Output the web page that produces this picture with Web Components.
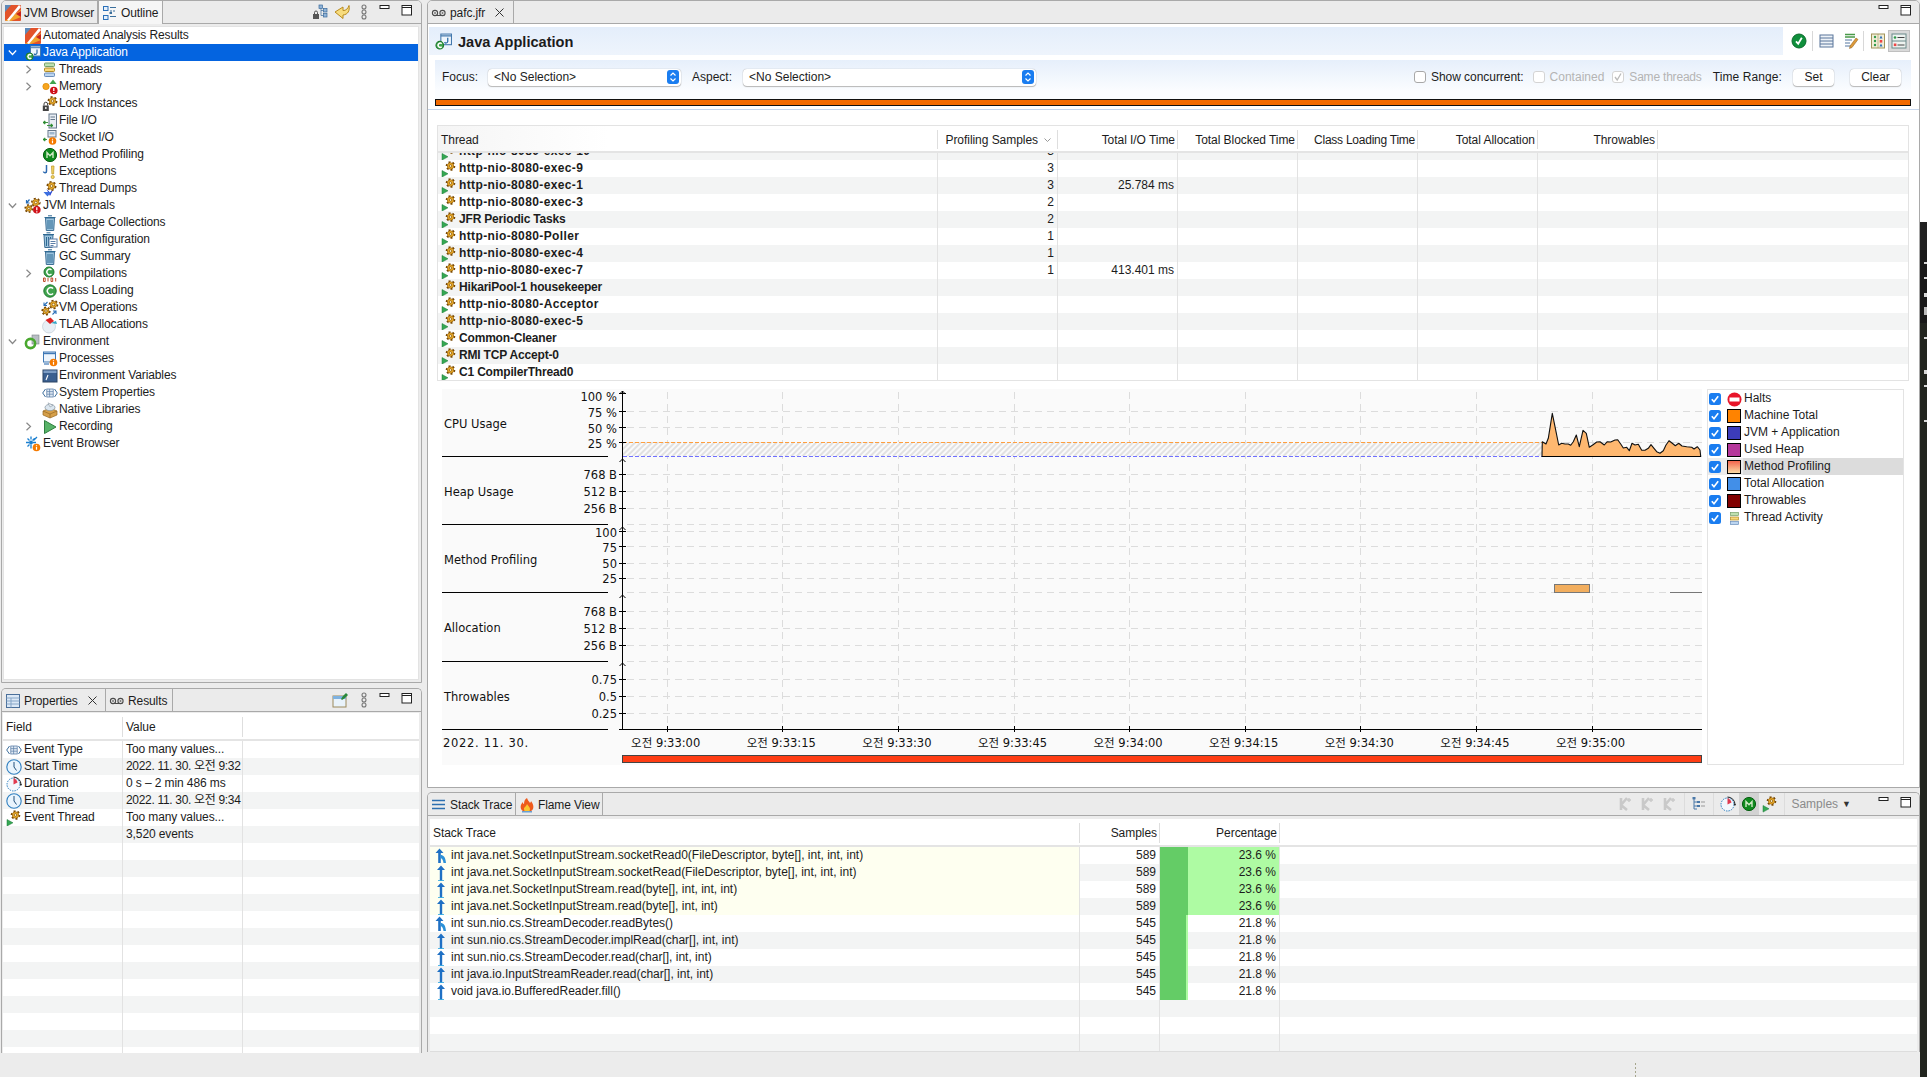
<!DOCTYPE html>
<html>
<head>
<meta charset="utf-8">
<style>
  html, body { margin: 0; padding: 0; background: #fff; }
  body { width: 1927px; height: 1077px; overflow: hidden; display: flex;
         font: 12px "Liberation Sans", "Noto Sans CJK KR", sans-serif; color: #1c1c1c; }
</style>
</head>
<body>
<app-window>
  <view-panel slot="left" style="height:683px" pad="2px 2px 2px 1px" closed>
    <view-tab slot="tabs" width="96"><app-icon name="flight" slot="icon"></app-icon>JVM Browser</view-tab>
    <view-tab slot="tabs" width="65" active><app-icon name="outline" slot="icon"></app-icon>Outline</view-tab>
    <app-icon slot="tools" name="locktree" style="margin-right:6px"></app-icon>
    <app-icon slot="tools" name="back" style="margin-right:6px"></app-icon>
    <app-icon slot="tools" name="dots" style="margin-right:5px"></app-icon>
    <app-icon slot="tools" name="min" style="margin-right:6px"></app-icon>
    <app-icon slot="tools" name="max" style="margin-right:6px"></app-icon>
    <tree-view id="tree"></tree-view>
  </view-panel>
  <view-panel slot="left" style="height:365px" pad="1px 2px 0 1px">
    <view-tab slot="tabs" width="104"><app-icon name="table" slot="icon"></app-icon>Properties<close-x slot="after"></close-x></view-tab>
    <view-tab slot="tabs" width="67"><app-icon name="tape" slot="icon"></app-icon>Results</view-tab>
    <app-icon slot="tools" name="pin" style="margin-right:8px"></app-icon>
    <app-icon slot="tools" name="dots" style="margin-right:5px"></app-icon>
    <app-icon slot="tools" name="min" style="margin-right:6px"></app-icon>
    <app-icon slot="tools" name="max" style="margin-right:6px"></app-icon>
    <data-table id="props" style="height:340px;letter-spacing:-.1px"></data-table>
  </view-panel>

  <view-panel slot="right" style="height:788px" closed white>
    <view-tab slot="tabs" width="86"><app-icon name="tape" slot="icon"></app-icon>pafc.jfr<close-x slot="after"></close-x></view-tab>
    <app-icon slot="tools" name="min" style="margin-right:6px"></app-icon>
    <app-icon slot="tools" name="max" style="margin-right:5px"></app-icon>
    <page-title>Java Application</page-title>
    <filter-bar></filter-bar>
    <data-table id="threads" bordered style="margin:15px 10px 0 9px;height:256px"></data-table>
    <flight-chart></flight-chart>
  </view-panel>
  <view-panel slot="right" style="height:260px" pad="3px 2px 0 2px">
    <view-tab slot="tabs" width="88"><app-icon name="list" slot="icon"></app-icon>Stack Trace</view-tab>
    <view-tab slot="tabs" width="87"><app-icon name="flame" slot="icon"></app-icon>Flame View</view-tab>
    <stack-tools slot="tools"></stack-tools>
    <data-table id="stack" style="height:233px;border-bottom:1px solid #ddd"></data-table>
  </view-panel>
  <status-dots slot="right"></status-dots>
</app-window>
<side-strip></side-strip>

<script>
// ---------- icon drawings ----------
const gear = (x, y, r) => `<circle cx="${x}" cy="${y}" r="${r + .8}" fill="none" stroke="#7a4800" stroke-width="1.6" pathLength="24" stroke-dasharray="2 2"/><circle cx="${x}" cy="${y}" r="${r}" fill="#f4b32a" stroke="#7a4800" stroke-width=".6"/><circle cx="${x}" cy="${y}" r="${r * .42}" fill="#fff3c8" stroke="#7a4800" stroke-width=".7"/>`;
const info = (x, y) => `<circle cx="${x}" cy="${y}" r="3.8" fill="#f57a00"/><path d="M${x} ${y - 2.2}v.9M${x} ${y - .6}v2.9" stroke="#fff" stroke-width="1.2"/>`;
const err = (x, y) => `<circle cx="${x}" cy="${y}" r="3.8" fill="#cf1018"/><path d="M${x} ${y - 2.5}v3M${x} ${y + 1.4}v1.2" stroke="#fff" stroke-width="1.3"/>`;
const trash = (x = 0) => `<path d="M${x + 3.5} 3h9l-.8 12.5h-7.4z" fill="#9cc4de" stroke="#3d6e94"/><path d="M${x + 2.5} 2.5h11M${x + 6} .8h4M${x + 6} 5v9M${x + 8} 5v9M${x + 10} 5v9" stroke="#2f6a93" fill="none"/>`;
const greenC = (x, y, r) => `<circle cx="${x}" cy="${y}" r="${r}" fill="#3fa34d" stroke="#1d7a2c"/><path d="M${x + r * .5} ${y - r * .4}A${r * .55} ${r * .55} 0 1 0 ${x + r * .5} ${y + r * .4}" fill="none" stroke="#fff" stroke-width="1.4"/>`;
const tri = (x, y, s = 6) => `<path d="M${x} ${y}l${s} ${s * .55}l-${s} ${s * .55}z" fill="#35a853" stroke="#1f7a3a" stroke-width=".5"/>`;
const clockFace = `<circle cx="8" cy="8" r="7.2" fill="#e9f4fd" stroke="#2f7fc0" stroke-width="1.1"/><path d="M8 3v5l2.5 3.5" fill="none" stroke="#214f7a"/>`;
const ICONS = {
  flight: `<rect width="16" height="16" rx="1" fill="#e2532b"/><path d="M0 0h6L0 7z" fill="#5d89b8"/><path d="M16 5v7L6 16H0z" fill="#f2a22c"/><path d="M14 0L2 15l2 1L16 2z" fill="#fff"/><path d="M11 9l5-3v6z" fill="#c8241c"/>`,
  outline: `<g fill="#e5effa" stroke="#2a6fb8"><rect x="1.5" y="1.5" width="4.5" height="4"/><rect x="1.5" y="10.5" width="4.5" height="4"/></g><path d="M8 2.5h6M8 6h2M11 6h2M8 11.5h6" stroke="#3b6f9c" stroke-width="1.2"/><rect x="7.5" y="7" width="2.5" height="2" fill="#3b6f9c"/>`,
  locktree: `<rect x="1" y="10" width="6" height="5" fill="#555"/><path d="M2.5 10V8.5a1.5 1.5 0 0 1 3 0V10" fill="none" stroke="#555"/><g fill="#8fb3d8" stroke="#3a6a9c" stroke-width=".7"><rect x="7" y="1" width="3.5" height="3.5"/><rect x="11.5" y="4.5" width="3.5" height="3.5"/><rect x="11.5" y="9.5" width="3.5" height="3.5"/></g><path d="M9 4.5v7h2.5M9 6.5h2.5" fill="none" stroke="#3a6a9c" stroke-width=".7"/>`,
  back: `<path d="M15 1.5c1 5-1 9-6 9.5v3.5L1 8l8-5v3.5c3 .3 5-2 6-5z" fill="#f7dc7e" stroke="#b88a1c"/>`,
  dots: `<g fill="none" stroke="#777" stroke-width="1.1"><circle cx="8" cy="3" r="2"/><circle cx="8" cy="8" r="2"/><circle cx="8" cy="13" r="2"/></g>`,
  min: `<rect x="3" y="1.5" width="9" height="3" fill="#fff" stroke="#222"/>`,
  max: `<rect x="3" y="1.5" width="9.5" height="9.5" fill="#fff" stroke="#222"/><path d="M3 3.5h9.5" stroke="#222"/>`,
  table: `<rect x="1.5" y="1.5" width="13" height="13" fill="#dbe8f6" stroke="#4a6f9a"/><path d="M1.5 5h13M1.5 8h13M1.5 11h13M6 5v9.5" stroke="#87a6c7" fill="none"/>`,
  tape: `<g fill="none" stroke="#4b4b4b" stroke-width="1.1"><circle cx="4" cy="8" r="2.6"/><circle cx="11.5" cy="8" r="2.6"/></g><path d="M2.5 10.5h11" stroke="#4b4b4b"/><circle cx="4" cy="8" r="1" fill="#777"/><circle cx="11.5" cy="8" r="1" fill="#777"/>`,
  pin: `<rect x="1" y="4" width="13" height="11" fill="#e9f3fb" stroke="#9c8a5c"/><rect x="1" y="4" width="13" height="3" fill="#7fb2e0"/><path d="M9 7l2-3 3-3 2 2-3 3-3 2z" fill="#2b8a3c"/>`,
  list: `<path d="M1 3.5h13M1 7.5h13M1 11.5h13" stroke="#2c6fb0" stroke-width="1.7"/>`,
  flame: `<path d="M8 1c1 3 2 3 3 5 1-1 1-2 1-2 2 3 3 5 2 8-1 2-3 3-6 3s-5-1-6-3c-1-3 0-5 2-7 0 1 0 2 1 2 0-3 1-5 3-6z" fill="#ee5a1c"/><path d="M8 7c1 2 3 3 3 5s-1 3-3 3-3-1-3-3 2-2 3-5z" fill="#fbc531"/><path d="M3 14h10v1.5H3z" fill="#6a9ed0"/>`,
  java: `<rect x="5.5" y="1" width="10" height="10" fill="#eef5fc" stroke="#4378ad"/><path d="M5.5 2.7h10" stroke="#4378ad"/><path d="M12 4.5v3.5a1.6 1.6 0 0 1-3 .6" fill="none" stroke="#2b6ba8" stroke-width="1.2"/>${greenC(4.5, 11.5, 3.6)}`,
  threads: `<rect x="2.5" y="1" width="10" height="3.5" rx=".8" fill="#bfe0b0" stroke="#76a069"/><rect x="2.5" y="6" width="10" height="3.5" rx=".8" fill="#f7d87a" stroke="#b08a24"/><rect x="2.5" y="11" width="10" height="3.5" rx=".8" fill="#bcd5f0" stroke="#6a8dba"/>`,
  memory: `<circle cx="4" cy="7.5" r="3.2" fill="#f7a51e" stroke="#d98400" stroke-width=".6"/><path d="M7.5 5l3.5-4.5L14.5 5z" fill="#3fa34d"/>${err(11.8, 11.5)}`,
  lock: `<rect x=".8" y="9.5" width="6" height="5.5" fill="#444"/><path d="M2 9.5V8a1.8 1.8 0 0 1 3.6 0v1.5" fill="none" stroke="#444"/><rect x="3" y="11" width="1.6" height="2" fill="#ddd"/>${gear(10.5, 5, 3.3)}`,
  file: `<rect x="7" y="1" width="7.5" height="14" fill="#e9eef4" stroke="#66788c"/><path d="M8.5 4h4.5M8.5 6.5h4.5" stroke="#66788c"/><path d="M1 9.5h5M1 9.5l2-1.6v3.2zM5 12.5h6M11 12.5l-2-1.6v3.2z" stroke="#2b8a2f" fill="#2b8a2f" stroke-width=".9"/>`,
  socket: `<rect x="6" y=".5" width="8" height="6.5" fill="#e9eef4" stroke="#66788c"/><rect x="7.5" y="2" width="5" height="2.5" fill="#9eb7cf"/><path d="M1 9.5h4M1 9.5l2-1.6v3.2z" stroke="#2b8a2f" fill="#2b8a2f" stroke-width=".9"/>${info(10.5, 11)}`,
  method: `<circle cx="8" cy="8" r="6.6" fill="#0f8a1e" stroke="#0a5f14"/><path d="M5 11V5.5l3 3.2 3-3.2V11" fill="none" stroke="#cfe9c4" stroke-width="1.4"/>`,
  exceptions: `<path d="M4.5 1v6a1.5 1.5 0 0 1-3 .5" fill="none" stroke="#2d6ab1" stroke-width="1.5"/><path d="M9.5 2h2.5l-.4 8h-1.7z" fill="#f3d566" stroke="#b99420" stroke-width=".7"/><circle cx="10.7" cy="13" r="1.6" fill="#f3d566" stroke="#b99420" stroke-width=".7"/>`,
  dumps: `<path d="M4.5 8l3.5 3.5L11.5 8 8 15z" fill="#2a3fd0"/><path d="M1.5 11h8l-4 4.5z" fill="#3b6fe0"/>${gear(9.5, 5, 3.4)}`,
  internals: `<path d="M1.5 5l3-3.5M1.5 2v3h3" fill="none" stroke="#2a6fb8" stroke-width="1.2"/>${gear(3.8, 10.5, 2.8)}${gear(10.8, 4.5, 3.2)}${err(11.8, 11.8)}`,
  trash: trash(),
  gcconfig: `${trash(-1.5)}<rect x="7" y="7" width="8" height="8" fill="#fff" stroke="#5c7fa8"/><path d="M8.5 9.5h5M8.5 11.5h5M8.5 13.5h3" stroke="#5c7fa8"/>`,
  compilations: `${greenC(7, 6, 5)}<path d="M1.5 12h1.7v3.5H1.5zM6 12v3.5M9 12h1.7v3.5H9zM13.7 12v3.5" fill="none" stroke="#b83a14" stroke-width=".9"/>`,
  classload: greenC(8, 8, 6.2),
  vmops: `${gear(4, 11, 3)}${gear(11.5, 4.5, 3.2)}<path d="M2 5.5l3.5-3.5M2 2.5v3h3M14 11l-3.5 3.5M14 14v-3h-3" fill="none" stroke="#2a6fb8" stroke-width="1.1"/>`,
  tlab: `<circle cx="7" cy="9.5" r="6.5" fill="#e8eff5" stroke="#b8c4cc" stroke-width=".6"/><path d="M3.5 3l5-2.5L12 4l-4 3z" fill="#dd2222"/><path d="M9 6l5-2 1 3z" fill="#31a6c8"/>`,
  env: `<rect x="7" y="1" width="7" height="9" fill="#b8bec4" stroke="#7c8388" stroke-width=".6"/><circle cx="5.5" cy="9.5" r="4.6" fill="none" stroke="#49a82f" stroke-width="2.6"/>`,
  processes: `<rect x="1.5" y="1" width="12" height="10" fill="#eef5fc" stroke="#3f78b5"/><path d="M1.5 2.5h12" stroke="#3f78b5" stroke-width="1.4"/><path d="M2 13h5" stroke="#3f78b5" stroke-width="1.2"/>${info(11.5, 11.5)}`,
  envvars: `<rect x="1" y="2" width="14" height="12" fill="#3a5f90" stroke="#2a4465"/><rect x="1.5" y="2.5" width="13" height="2.5" fill="#7c9cc4"/><path d="M4 12l2-5" stroke="#fff" stroke-width="1.1"/>`,
  sysprops: `<path d="M3.5 4L.7 8l2.8 4M12.5 4l2.8 4-2.8 4" fill="none" stroke="#3c6e9c"/><rect x="4.8" y="4" width="6.4" height="8" fill="#dfe9f3" stroke="#5c7fa8" stroke-width=".8"/><path d="M5 6.6h6M5 9.2h6M7.6 4v8" stroke="#5c7fa8" stroke-width=".7"/>`,
  native: `<path d="M1 9l7-3 7 3v4l-7 3-7-3z" fill="#d6a04a" stroke="#966824" stroke-width=".7"/><path d="M1 9l7 3 7-3M8 12v4" fill="none" stroke="#966824" stroke-width=".7"/><ellipse cx="8" cy="5.5" rx="5" ry="3.2" fill="#dbe6ef" stroke="#7e8c99" stroke-width=".7"/><path d="M6 .8l5 2.6-3 1.6z" fill="#e8eef3" stroke="#7e8c99" stroke-width=".5"/>`,
  recording: `<path d="M2.5 1.5L14 8 2.5 14.5z" fill="#58b368" stroke="#2f7f3f"/>`,
  events: `<path d="M6 .5v3M6 8.5v4M1 6.5h3M8 6.5h3M2.5 2.5l2 2M9.5 2.5l-2 2M2.5 10.5l2-2M12 1l-3.5 3.5" stroke="#1a7fd0" stroke-width="1.3"/><circle cx="6" cy="6.5" r="2" fill="#1a7fd0"/>${info(11.5, 11.5)}`,
  thread: `${tri(1, 9.5, 6)}${gear(9.5, 5, 3.2)}`,
  clock: clockFace,
  duration: `<circle cx="7.5" cy="8.5" r="6.5" fill="#f3f8fd" stroke="#2f7fc0" stroke-dasharray="1.5 1"/><path d="M7.5 2v6.5l4-2A6 6 0 0 0 7.5 2z" fill="#e03a50"/><path d="M7.5 1A7.5 7.5 0 0 1 15 8.5" fill="none" stroke="#222"/><path d="M13.5 8l1.5 2 1-2z" fill="#222"/>`,
  up: `<path d="M8 .5l4 4.5H9.2v10.5H6.8V5H4z" fill="#1f70c4"/><path d="M5 15h6v.8H5z" fill="#19a0df"/>`,
  upbranch: `<path d="M6.5 .5l4 4.5H7.8V15H5.2V5H2.5z" fill="#1f70c4"/><path d="M7.5 7c3 0 5 2 5.5 8h-2.5c-.3-3-1.5-4.5-3-5z" fill="#2a90d8"/>`,
  check: `<circle cx="8" cy="8" r="7" fill="#0f8f3c" stroke="#0a6a2b"/><path d="M5 8.3l2.2 2.5 3.6-6" fill="none" stroke="#fff" stroke-width="1.8"/>`,
  tbl2: `<rect x="1" y="2" width="13" height="12" fill="#eef3f8" stroke="#58749a"/><path d="M1 5h13M1 8h13M1 11h13" stroke="#58749a"/>`,
  edit: `<path d="M2 1.5h10M2 4h10" stroke="#4a9a4a" stroke-width="1.5"/><path d="M2 7h7M2 10h5M2 13h7" stroke="#5577a0"/><path d="M7 13l6-8 2 1.5-6 8-2.5 1z" fill="#dd9a3a" stroke="#8a5a18" stroke-width=".5"/>`,
  compact: `<rect x="1.5" y="1" width="13" height="14" fill="#f2eed8" stroke="#a0945a"/><path d="M8 1v14" stroke="#a0945a" stroke-width=".6"/><g fill="#2f9a4a"><circle cx="5" cy="4" r="1.2"/><circle cx="5" cy="8" r="1.2"/><circle cx="5" cy="12" r="1.2"/></g><path d="M11 2.5l1.5 3h-3z" fill="#2a6fb8"/><rect x="9.7" y="7" width="2.6" height="2.6" fill="#e44"/><path d="M11 10.5l1.5 3h-3z" fill="#2a6fb8"/>`,
  wide: `<rect x="1" y="1" width="14" height="14" fill="#eef3f0" stroke="#6a8a8a"/><path d="M1 8h14" stroke="#6a8a8a"/><circle cx="4" cy="4.5" r="1.3" fill="#2f9a4a"/><path d="M6.5 4.5h7" stroke="#444"/><rect x="2.8" y="10.5" width="2.6" height="2.6" fill="#e44"/><path d="M6.5 12h7" stroke="#444"/>`,
  kup: `<path d="M3 2v12M3 9l6-7M3 9l6 5" fill="none" stroke="#c9c9c9" stroke-width="2.6"/><path d="M11 2v4M9 4h4" stroke="#c9c9c9" stroke-width="1.4"/>`,
  tree2: `<path d="M3 2v11M3 6h3M3 10h3M3 13h3" fill="none" stroke="#4a78a8"/><g fill="#4a78a8"><rect x="1.5" y="1" width="3" height="2.4"/><rect x="6" y="5" width="3" height="2"/><rect x="6" y="9" width="3" height="2"/></g><path d="M10 6h4M10 10h4" stroke="#999"/>`
};

class AppIcon extends HTMLElement {
  constructor() {
    super();
    this.attachShadow({ mode: 'open' });
  }
  connectedCallback() {
    const size = this.getAttribute('size') || 16;
    this.shadowRoot.innerHTML = `
      <style>:host { display: inline-flex; flex: none; width: ${size}px; height: ${size}px; } svg { display: block; overflow: visible; }</style>
      <svg width="${size}" height="${size}" viewBox="0 0 16 16">${ICONS[this.getAttribute('name')] || ''}</svg>`;
  }
}
customElements.define('app-icon', AppIcon);

class CloseX extends HTMLElement {
  constructor() {
    super();
    this.attachShadow({ mode: 'open' }).innerHTML = `
      <style>:host { display: inline-flex; margin-left: 7px; }</style>
      <svg width="9" height="9"><path d="M.5 .5l8 8M8.5 .5l-8 8" stroke="#333" fill="none"/></svg>`;
  }
}
customElements.define('close-x', CloseX);

// ---------- window and panels ----------
class AppWindow extends HTMLElement {
  constructor() {
    super();
    this.attachShadow({ mode: 'open' }).innerHTML = `
      <style>
        :host { display: grid; grid-template-columns: 421px 1fr; column-gap: 5px; flex: none;
                width: 1919px; height: 1077px; padding-left: 1px; background: #ececec; }
        .col { display: flex; flex-direction: column; min-width: 0; }
        .left { gap: 5px; }
        .right { gap: 4px; }
      </style>
      <div class="col left"><slot name="left"></slot></div>
      <div class="col right"><slot name="right"></slot></div>`;
  }
}
customElements.define('app-window', AppWindow);

class ViewPanel extends HTMLElement {
  constructor() {
    super();
    this.attachShadow({ mode: 'open' });
  }
  connectedCallback() {
    const pad = this.getAttribute('pad') || '0';
    this.shadowRoot.innerHTML = `
      <style>
        :host { display: flex; flex-direction: column; flex: none; box-sizing: border-box;
                border: 1px solid #a9a9a9; border-bottom: none; border-radius: 5px 5px 0 0; overflow: hidden; }
        :host([closed]) { border-bottom: 1px solid #a9a9a9; }
        .head { display: flex; align-items: stretch; height: 23px; box-sizing: border-box; flex: none;
                border-bottom: 1px solid #a9a9a9; background: #ebebeb; }
        .tools { margin-left: auto; display: flex; align-items: center; }
        .body { flex: 1; min-height: 0; padding: ${pad}; display: flex; flex-direction: column; }
        :host([white]) .body { background: #fff; }
      </style>
      <div class="head"><slot name="tabs"></slot><div class="tools"><slot name="tools"></slot></div></div>
      <div class="body"><slot></slot></div>`;
  }
}
customElements.define('view-panel', ViewPanel);

class ViewTab extends HTMLElement {
  constructor() {
    super();
    this.attachShadow({ mode: 'open' });
  }
  connectedCallback() {
    this.shadowRoot.innerHTML = `
      <style>
        :host { display: flex; align-items: center; gap: 3px; box-sizing: border-box; flex: none;
                width: ${this.getAttribute('width')}px; padding: 0 0 0 3px; border-right: 1px solid #a9a9a9;
                white-space: nowrap; font-size: 12px; letter-spacing: -.1px; height: 23px; margin-bottom: -1px; }
        :host([active]) { background: #f6f6f6; border-left: 1px solid #a9a9a9; }
      </style>
      <slot name="icon"></slot><span><slot></slot></span><slot name="after"></slot>`;
  }
}
customElements.define('view-tab', ViewTab);

// ---------- outline tree ----------
const TREE = [
  [1, 'flight', 'Automated Analysis Results', ''],
  [1, 'java', 'Java Application', 'v', true],
  [2, 'threads', 'Threads', '>'],
  [2, 'memory', 'Memory', '>'],
  [2, 'lock', 'Lock Instances', ''],
  [2, 'file', 'File I/O', ''],
  [2, 'socket', 'Socket I/O', ''],
  [2, 'method', 'Method Profiling', ''],
  [2, 'exceptions', 'Exceptions', ''],
  [2, 'dumps', 'Thread Dumps', ''],
  [1, 'internals', 'JVM Internals', 'v'],
  [2, 'trash', 'Garbage Collections', ''],
  [2, 'gcconfig', 'GC Configuration', ''],
  [2, 'trash', 'GC Summary', ''],
  [2, 'compilations', 'Compilations', '>'],
  [2, 'classload', 'Class Loading', ''],
  [2, 'vmops', 'VM Operations', ''],
  [2, 'tlab', 'TLAB Allocations', ''],
  [1, 'env', 'Environment', 'v'],
  [2, 'processes', 'Processes', ''],
  [2, 'envvars', 'Environment Variables', ''],
  [2, 'sysprops', 'System Properties', ''],
  [2, 'native', 'Native Libraries', ''],
  [2, 'recording', 'Recording', '>'],
  [1, 'events', 'Event Browser', '']
];
const chevron = (dir, color) => dir === 'v'
  ? `<svg width="9" height="9"><path d="M.8 2.5l3.7 4 3.7-4" fill="none" stroke="${color}" stroke-width="1.2"/></svg>`
  : dir === '>' ? `<svg width="9" height="9"><path d="M2.5 .8l4 3.7-4 3.7" fill="none" stroke="${color}" stroke-width="1.2"/></svg>` : '';

class TreeView extends HTMLElement {
  constructor() {
    super();
    this.attachShadow({ mode: 'open' }).innerHTML = `
      <style>
        :host { display: block; flex: 1; background: #fff; border: 1px solid #e3e3e3; overflow: hidden; letter-spacing: -.12px; }
        .row { display: flex; align-items: center; height: 17px; white-space: nowrap; }
        .sel { background: #0464e0; color: #fff; }
        .arrow { width: 9px; height: 9px; flex: none; display: flex; }
        .lv1 { padding-left: 4px; }
        .lv2 { padding-left: 20px; }
        .lv1 app-icon { margin-left: 8px; }
        .lv2 app-icon { margin-left: 9px; }
        .lv1 span { margin-left: 2px; }
        .lv2 span { margin-left: 1px; }
        span { margin-bottom: 1px; }
      </style>
      ${TREE.map(r => `<div class="row lv${r[0]} ${r[4] ? 'sel' : ''}"><div class="arrow">${chevron(r[3], r[4] ? '#fff' : '#888')}</div><app-icon name="${r[1]}"></app-icon><span>${r[2]}</span></div>`).join('')}`;
  }
}
customElements.define('tree-view', TreeView);

// ---------- tables ----------
class DataTable extends HTMLElement {
  constructor() {
    super();
    this.attachShadow({ mode: 'open' });
  }
  configure({ cols, head, rows, offset = 0, stripe = 1, headHeight = 28, headFade = false }) {
    const grid = cols.join(' ');
    const headCells = head.map(h => `<div class="th ${h.r ? 'r' : ''}" style="${h.ls ? `letter-spacing:${h.ls}px` : ''}">${h.t}${h.sort ? '<svg class="sort" width="7" height="5"><path d="M.5 .5l3 3 3-3" fill="none" stroke="#999"/></svg>' : ''}</div>`).join('');
    const body = rows.map((row, i) => `<div class="tr ${i % 2 === stripe ? 'alt' : ''}">` + row.map(c => {
      const st = [c.bg ? `background:${c.bg}` : '', c.ls ? `letter-spacing:${c.ls}px` : '', c.tight ? 'padding-right:0' : ''].join(';');
      return `<div class="td ${c.r ? 'r' : ''} ${c.b ? 'b' : ''}" style="${st}">${c.i ? `<app-icon name="${c.i}"></app-icon>` : ''}<span>${c.t || ''}</span></div>`;
    }).join('') + '</div>').join('');
    this.shadowRoot.innerHTML = `
      <style>
        :host { display: flex; flex-direction: column; flex: none; overflow: hidden; background: #fff; box-sizing: border-box; }
        :host([bordered]) { border: 1px solid #e3e3e3; }
        .thead, .tr { display: grid; grid-template-columns: ${grid}; }
        .thead { height: ${headHeight}px; flex: none; box-sizing: border-box; border-bottom: 2px solid #e4e4e4; padding: 4px 0 2px;
                 ${headFade ? 'background: linear-gradient(90deg, #f5f5f5, #fff 170px);' : ''} }
        .th { border-right: 1px solid #dedede; padding: 1px 2px 0 3px; line-height: 18px; white-space: nowrap; overflow: hidden; letter-spacing: -.05px; }
        .th:last-child { border-right: none; }
        .th.r { text-align: right; }
        .sort { margin: 0 4px 0 6px; vertical-align: 1px; }
        .rows { flex: 1; overflow: hidden; }
        .inner { margin-top: ${offset}px; }
        .tr { height: 17px; }
        .alt { background: #f3f4f4; }
        .td { display: flex; align-items: center; gap: 2px; border-right: 1px solid #e2e2e2; padding: 0 3px; white-space: nowrap; overflow: hidden; line-height: 17px; }
        .td:last-child { border-right: none; }
        .td.r { justify-content: flex-end; }
        .td.b { font-weight: bold; }
      </style>
      <div class="thead">${headCells}</div>
      <div class="rows"><div class="inner">${body}</div></div>`;
  }
}
customElements.define('data-table', DataTable);

// ---------- editor page parts ----------
class PageTitle extends HTMLElement {
  constructor() {
    super();
    this.attachShadow({ mode: 'open' }).innerHTML = `
      <style>
        :host { display: flex; flex: none; height: 28px; margin: 3px 0 0 1px; }
        .band { width: 1354px; flex: none; display: flex; align-items: center; gap: 6px; padding: 1px 0 0 6px; box-sizing: border-box;
                background: linear-gradient(#e4eefb, #eef4fc); font: bold 14.6px "Liberation Sans", sans-serif; }
        .tools { display: flex; align-items: center; padding-left: 8px; }
        .sep { width: 1px; height: 20px; background: #d8d8d8; }
        .on { background: #d9d9d9; border: 1px solid #c0c0c0; padding: 2px; display: flex; }
      </style>
      <div class="band"><app-icon name="java" size="17"></app-icon><span><slot></slot></span></div>
      <div class="tools">
        <app-icon name="check"></app-icon><div class="sep" style="margin:0 6px 0 5px"></div>
        <app-icon name="tbl2" style="margin-right:8px"></app-icon><app-icon name="edit"></app-icon><div class="sep" style="margin:0 6px 0 4px"></div>
        <app-icon name="compact" style="margin-right:2px"></app-icon><div class="on"><app-icon name="wide"></app-icon></div>
      </div>`;
  }
}
customElements.define('page-title', PageTitle);

const stepper = `<svg width="12" height="14"><rect width="12" height="14" rx="3" fill="#1a7df0"/><path d="M3.5 5.5L6 3l2.5 2.5M3.5 8.5L6 11l2.5-2.5" fill="none" stroke="#fff" stroke-width="1.2"/></svg>`;
class ComboBox extends HTMLElement {
  constructor() {
    super();
    this.attachShadow({ mode: 'open' }).innerHTML = `
      <style>
        :host { display: flex; align-items: center; justify-content: space-between; height: 17px; box-sizing: border-box; flex: none;
                background: #fff; border-radius: 4px; box-shadow: 0 0 1px #999, 0 1px 1px #bbb; padding: 0 2px 0 6px; }
        svg { display: block; }
      </style>
      <span><slot></slot></span>${stepper}`;
  }
}
customElements.define('combo-box', ComboBox);

class CheckMark extends HTMLElement {
  constructor() {
    super();
    this.attachShadow({ mode: 'open' });
  }
  connectedCallback() {
    const off = this.hasAttribute('disabled');
    const tick = this.hasAttribute('checked') ? `<path d="M3 6l2.2 3L9 2.5" fill="none" stroke="${off ? '#bbb' : '#555'}" stroke-width="1.3"/>` : '';
    this.shadowRoot.innerHTML = `
      <style>:host { display: flex; align-items: center; gap: 5px; color: ${off ? '#b4b4b4' : 'inherit'}; white-space: nowrap; flex: none; } svg { display: block; }</style>
      <svg width="12" height="12"><rect x=".5" y=".5" width="11" height="11" rx="2.5" fill="#fff" stroke="${off ? '#d4d4d4' : '#a8a8a8'}"/>${tick}</svg><span><slot></slot></span>`;
  }
}
customElements.define('check-mark', CheckMark);

class PushButton extends HTMLElement {
  constructor() {
    super();
    this.attachShadow({ mode: 'open' }).innerHTML = `
      <style>
        :host { display: flex; align-items: center; justify-content: center; height: 17px; flex: none;
                background: #fff; border-radius: 4px; box-shadow: 0 0 1px #999, 0 1px 1px #bbb; }
      </style><slot></slot>`;
  }
}
customElements.define('push-button', PushButton);

class FilterBar extends HTMLElement {
  constructor() {
    super();
    this.attachShadow({ mode: 'open' }).innerHTML = `
      <style>
        :host { display: block; flex: none; margin-top: 5px; }
        .band { display: flex; align-items: center; height: 39px; margin: 0 8px 0 7px; padding: 0 10px 5px 7px; box-sizing: border-box;
                background: linear-gradient(#e6effb, #fbfdff 80%); }
        .grow { margin-left: auto; }
        .bar { margin: 0 8px 0 7px; background: #f26a00; border: 1px solid #111; height: 5px; }
        .line { height: 1px; background: #c6d6ec; margin-top: 3px; }
      </style>
      <div class="band">
        <span>Focus:</span>
        <combo-box style="width:193px;margin-left:10px">&lt;No Selection&gt;</combo-box>
        <span style="margin-left:11px">Aspect:</span>
        <combo-box style="width:293px;margin-left:11px">&lt;No Selection&gt;</combo-box>
        <check-mark class="grow" style="letter-spacing:-.05px">Show concurrent:</check-mark>
        <check-mark disabled style="margin-left:9px">Contained</check-mark>
        <check-mark disabled checked style="margin-left:8px;letter-spacing:-.2px">Same threads</check-mark>
        <span style="margin-left:11px;letter-spacing:.1px">Time Range:</span>
        <push-button style="width:41px;margin-left:11px">Set</push-button>
        <push-button style="width:51px;margin-left:16px">Clear</push-button>
      </div>
      <div class="bar"></div>
      <div class="line"></div>`;
  }
}
customElements.define('filter-bar', FilterBar);

// ---------- chart ----------
const AREA = [[127,155],[138,162],[145,145],[157,70],[165,110],[176,165],[185,160],[195,162],[205,162],[212,166],[220,155],[229,135],[238,170],[249,121],[259,130],[268,172],[278,165],[290,156],[300,155],[313,165],[322,155],[332,156],[345,150],[353,149],[362,162],[370,174],[380,172],[388,182],[396,160],[405,165],[415,163],[425,181],[435,181],[445,175],[453,164],[462,175],[470,185],[480,190],[490,182],[498,165],[507,152],[517,160],[526,167],[536,160],[546,168],[560,170],[575,172],[582,177],[592,170],[600,180],[602,199]]
  .map(p => [(1500 + p[0] / 3).toFixed(1), (390 + p[1] / 3).toFixed(1)]);
const LANES = [['CPU Usage', 68], ['Heap Usage', 68], ['Method Profiling', 68], ['Allocation', 69], ['Throwables', 68]];
const TICKS = [
  [397, 393, '100 %'], [412.5, 411, '75 %'], [428.5, 427, '50 %'], [443.5, 442, '25 %'],
  [475, 474, '768 B'], [492, 491, '512 B'], [509, 508, '256 B'],
  [533, 531, '100'], [548, 546, '75'], [564, 563, '50'], [579, 578, '25'],
  [612, 611, '768 B'], [629, 628, '512 B'], [646, 645, '256 B'],
  [680, 679, '0.75'], [697, 696, '0.5'], [714, 713, '0.25']
];
const TIMES = ['9:33:00', '9:33:15', '9:33:30', '9:33:45', '9:34:00', '9:34:15', '9:34:30', '9:34:45', '9:35:00'];
const LEGEND = [
  ['Halts', `<circle cx="7.5" cy="7.5" r="7" fill="#e8152a"/><rect x="2.5" y="5.5" width="10" height="4" fill="#fff"/>`],
  ['Machine Total', `<rect x=".5" y=".5" width="13" height="13" fill="#ff8300" stroke="#000"/>`],
  ['JVM + Application', `<rect x=".5" y=".5" width="13" height="13" fill="#3c3cba" stroke="#000"/>`],
  ['Used Heap', `<rect x=".5" y=".5" width="13" height="13" fill="#b5379b" stroke="#000"/>`],
  ['Method Profiling', `<defs><linearGradient id="mp" x1="0" y1="0" x2="0" y2="1"><stop offset="0" stop-color="#f2604a"/><stop offset="1" stop-color="#fbe0a8"/></linearGradient></defs><rect x=".5" y=".5" width="13" height="13" fill="url(#mp)" stroke="#000"/>`, true],
  ['Total Allocation', `<rect x=".5" y=".5" width="13" height="13" fill="#428fe8" stroke="#000"/>`],
  ['Throwables', `<rect x=".5" y=".5" width="13" height="13" fill="#800000" stroke="#000"/>`],
  ['Thread Activity', `<g transform="translate(3 1)"><rect x=".5" y=".5" width="8" height="3" fill="#bfe0b0" stroke="#76a069" stroke-width=".7"/><rect x=".5" y="5" width="8" height="3" fill="#f7d87a" stroke="#b08a24" stroke-width=".7"/><rect x=".5" y="9.5" width="8" height="3" fill="#bcd5f0" stroke="#6a8dba" stroke-width=".7"/></g>`]
];

class FlightChart extends HTMLElement {
  constructor() {
    super();
    const gridY = [411, 427, 442, 474, 491, 508, 524.5, 531, 546, 563, 578, 592.5, 611, 628, 645, 661, 679, 696, 713];
    const gridX = TIMES.map((t, i) => 666.7 + 115.6 * i);
    const axisTops = [391, 459, 527, 595, 663];
    const area = `M1542 456.5 ${AREA.map(p => 'L' + p.join(' ')).join(' ')} L1700.7 456.5 Z`;
    const svg = `
      <svg width="1094" height="376" viewBox="608 389 1094 376">
        <defs><pattern id="hatch" width="4" height="4" patternUnits="userSpaceOnUse" patternTransform="rotate(-45)"><rect width="4" height="4" fill="#fafafa"/><path d="M0 2h4" stroke="#c8c8c8"/></pattern></defs>
        ${gridY.map(y => `<path d="M627 ${Math.floor(y) + .5}H1702" stroke="#dcdcdc" stroke-dasharray="7 5"/>`).join('')}
        ${gridX.map(x => `<path d="M${Math.round(x) + .5} 392V729" stroke="#dcdcdc" stroke-dasharray="7 5"/>`).join('')}
        <rect x="623" y="442" width="919" height="14" fill="url(#hatch)"/>
        <path d="M623 442.5H1542" stroke="#ff9e3d" stroke-dasharray="4 2"/>
        <path d="M623 456.5H1542" stroke="#7070ff" stroke-dasharray="4 2"/>
        <path d="${area}" fill="#ffb870" stroke="#111" stroke-width="1.1" stroke-linejoin="round"/>
        <path d="M1542 456.5H1701" stroke="#000" stroke-width="1.2"/>
        <rect x="1554.5" y="584.5" width="35" height="8" fill="#f2ae5e" stroke="#777"/>
        <path d="M1670 592.5H1702" stroke="#777"/>
        <path d="M622.5 391V729.5M619 729.5H1702" stroke="#000"/>
        ${axisTops.map(y => `<path d="M619.5 ${y + 3}l3-3 3 3" fill="none" stroke="#000"/>`).join('')}
        ${TICKS.map(t => `<path d="M619 ${t[1] + .5}h7" stroke="#000"/><text x="617" y="${t[0] + 4}" text-anchor="end">${t[2]}</text>`).join('')}
        ${gridX.map((x, i) => `<path d="M${Math.round(x) + .5} 726v6" stroke="#000"/><text x="${x - 1}" y="747" text-anchor="middle">오전 ${TIMES[i]}</text>`).join('')}
        <rect x="622.5" y="755.5" width="1079" height="7" fill="#ff3d14" stroke="#444"/>
      </svg>`;
    this.attachShadow({ mode: 'open' }).innerHTML = `
      <style>
        :host { display: flex; flex: none; height: 376px; margin: 8px 0 0 14px; font: 11.5px "DejaVu Sans", "Noto Sans CJK KR", sans-serif; color: #111; }
        .plot { display: flex; background: #fafafa; flex: none; width: 1260px; }
        .labels { width: 166px; flex: none; display: flex; flex-direction: column; }
        .lane { display: flex; align-items: center; box-sizing: border-box; border-bottom: 1px solid #000; padding: 2px 0 0 2px; }
        .date { padding: 5px 0 0 1px; letter-spacing: .7px; line-height: 16px; }
        svg { display: block; flex: none; overflow: visible; }
        svg text { font: 11.5px "DejaVu Sans", "Noto Sans CJK KR", sans-serif; fill: #111; }
        .legend { width: 197px; margin-left: 5px; flex: none; box-sizing: border-box; border: 1px solid #e3e3e3; background: #fff; font: 12px "Liberation Sans", sans-serif; }
        .item { display: flex; align-items: center; height: 17px; color: #1c1c1c; }
        .box { width: 12px; height: 12px; margin: 0 5px 0 1px; flex: none; overflow: hidden; }
        .swatch { width: 14px; height: 14px; margin-right: 3px; flex: none; display: block; }
        .item span { flex: 1; line-height: 17px; }
        .sel { background: linear-gradient(90deg, #ececec 35px, #dcdcdc 35px); }
      </style>
      <div class="plot">
        <div class="labels">
          ${LANES.map(l => `<div class="lane" style="height:${l[1]}px">${l[0]}</div>`).join('')}
          <div class="date">2022. 11. 30.</div>
        </div>
        ${svg}
      </div>
      <div class="legend">
        ${LEGEND.map(l => `<div class="item ${l[2] ? 'sel' : ''}">
          <svg class="box" viewBox="0 0 12 12"><rect width="12" height="12" rx="2.5" fill="#1a7df0"/><path d="M2.8 6.2l2.2 2.6 4.2-5.6" fill="none" stroke="#fff" stroke-width="1.6"/></svg>
          <svg class="swatch" viewBox="0 0 14 14" style="margin-left:1px">${l[1]}</svg>
          <span>${l[0]}</span></div>`).join('')}
      </div>`;
  }
}
customElements.define('flight-chart', FlightChart);

// ---------- little bits ----------
class StackTools extends HTMLElement {
  constructor() {
    super();
    this.attachShadow({ mode: 'open' }).innerHTML = `
      <style>
        :host { display: flex; align-items: center; color: #8a8a8a; }
        .sep { width: 1px; height: 22px; background: #dcdcdc; margin: 0 6px; }
        .on { background: #d2d2d2; display: flex; padding: 3px 2px; margin: 0 3px; }
        .gap { margin-right: 6px; }
      </style>
      <app-icon name="kup" class="gap"></app-icon><app-icon name="kup" class="gap"></app-icon><app-icon name="kup"></app-icon>
      <div class="sep"></div><app-icon name="tree2"></app-icon>
      <div class="sep"></div><app-icon name="duration"></app-icon>
      <div class="on"><app-icon name="method"></app-icon></div><app-icon name="thread"></app-icon>
      <div class="sep"></div><span>Samples</span><span style="font-size:9px;color:#333;margin:0 25px 0 4px">▼</span>
      <app-icon name="min" style="margin-right:6px"></app-icon><app-icon name="max" style="margin-right:5px"></app-icon>`;
  }
}
customElements.define('stack-tools', StackTools);

class StatusDots extends HTMLElement {
  constructor() {
    super();
    this.attachShadow({ mode: 'open' }).innerHTML = `
      <style>
        :host { display: block; flex: 1; padding: 7px 0 0 1208px; }
        div { width: 1px; height: 15px; background: repeating-linear-gradient(#a5a58c 0 2px, transparent 2px 4px); }
      </style><div></div>`;
  }
}
customElements.define('status-dots', StatusDots);

class SideStrip extends HTMLElement {
  constructor() {
    super();
    const mark = (y, h, c = '#d8d8d8') => `linear-gradient(${c}, ${c}) 4px ${y}px / 3px ${h}px no-repeat`;
    const marks = [mark(40, 2), mark(55, 2), mark(71, 4), mark(85, 8, '#bbb'), mark(115, 2), mark(148, 4), mark(163, 2), mark(198, 2)].join(',');
    this.attachShadow({ mode: 'open' }).innerHTML = `
      <style>
        :host { display: block; flex: none; width: 7px; margin-top: 222px;
                background: ${marks}, linear-gradient(#222 0 28px, #191919 28px 101px, #22251f 101px); }
      </style>`;
  }
}
customElements.define('side-strip', SideStrip);

// ---------- table data ----------
const threadNames = [
  ['http-nio-8080-exec-10', '3', ''], ['http-nio-8080-exec-9', '3', ''], ['http-nio-8080-exec-1', '3', '25.784 ms'],
  ['http-nio-8080-exec-3', '2', ''], ['JFR Periodic Tasks', '2', ''], ['http-nio-8080-Poller', '1', ''],
  ['http-nio-8080-exec-4', '1', ''], ['http-nio-8080-exec-7', '1', '413.401 ms'], ['HikariPool-1 housekeeper', '', ''],
  ['http-nio-8080-Acceptor', '', ''], ['http-nio-8080-exec-5', '', ''], ['Common-Cleaner', '', ''],
  ['RMI TCP Accept-0', '', ''], ['C1 CompilerThread0', '', '']
];
document.getElementById('threads').configure({
  cols: ['500px', '120px', '120px', '120px', '120px', '120px', '120px', '1fr'],
  offset: -10,
  stripe: 0,
  headHeight: 27,
  headFade: true,
  head: [{ t: 'Thread' }, { t: 'Profiling Samples', r: 1, sort: 1 }, { t: 'Total I/O Time', r: 1 }, { t: 'Total Blocked Time', r: 1 },
    { t: 'Class Loading Time', r: 1, ls: -.25 }, { t: 'Total Allocation', r: 1 }, { t: 'Throwables', r: 1 }, { t: '' }],
  rows: threadNames.map(n => [{ t: n[0], i: 'thread', b: 1, ls: n[0].startsWith('http') ? .38 : -.18 }, { t: n[1], r: 1 }, { t: n[2], r: 1 }, {}, {}, {}, {}, {}])
});

const props = [
  ['sysprops', 'Event Type', 'Too many values...'], ['clock', 'Start Time', '2022. 11. 30. 오전 9:32', 1],
  ['duration', 'Duration', '0 s – 2 min 486 ms'], ['clock', 'End Time', '2022. 11. 30. 오전 9:34', 1],
  ['thread', 'Event Thread', 'Too many values...'], ['', '', '3,520 events']
];
while (props.length < 19) props.push(['', '', '']);
document.getElementById('props').configure({
  cols: ['120px', '120px', '1fr'],
  head: [{ t: 'Field' }, { t: 'Value' }, { t: '' }],
  rows: props.map(p => [{ t: p[1], i: p[0] }, { t: p[2], ls: p[3] ? -.32 : 0, tight: p[3] }, {}])
});

const frames = [
  ['upbranch', 'int java.net.SocketInputStream.socketRead0(FileDescriptor, byte[], int, int, int)', '589', '23.6 %'],
  ['up', 'int java.net.SocketInputStream.socketRead(FileDescriptor, byte[], int, int, int)', '589', '23.6 %'],
  ['up', 'int java.net.SocketInputStream.read(byte[], int, int, int)', '589', '23.6 %'],
  ['up', 'int java.net.SocketInputStream.read(byte[], int, int)', '589', '23.6 %'],
  ['upbranch', 'int sun.nio.cs.StreamDecoder.readBytes()', '545', '21.8 %'],
  ['up', 'int sun.nio.cs.StreamDecoder.implRead(char[], int, int)', '545', '21.8 %'],
  ['up', 'int sun.nio.cs.StreamDecoder.read(char[], int, int)', '545', '21.8 %'],
  ['up', 'int java.io.InputStreamReader.read(char[], int, int)', '545', '21.8 %'],
  ['up', 'void java.io.BufferedReader.fill()', '545', '21.8 %']
];
const hot = 'linear-gradient(90deg, #64cc66 28px, #aefba3 28px)';
const warm = 'linear-gradient(90deg, #64cc66 26px, #aefba3 26px, #aefba3 28px, #fff 28px)';
const warmAlt = 'linear-gradient(90deg, #64cc66 26px, #aefba3 26px, #aefba3 28px, #f3f4f4 28px)';
const stackRows = frames.map((f, i) => [
  { t: f[1], i: f[0], bg: i < 4 ? '#fefff0' : '' }, { t: f[2], r: 1 },
  { t: f[3], r: 1, bg: i < 4 ? hot : (i % 2 ? warmAlt : warm) }, {}
]);
for (let i = 0; i < 3; i++) stackRows.push([{}, {}, {}, {}]);
document.getElementById('stack').configure({
  cols: ['650px', '80px', '120px', '1fr'],
  head: [{ t: 'Stack Trace' }, { t: 'Samples', r: 1 }, { t: 'Percentage', r: 1 }, { t: '' }],
  rows: stackRows
});
</script>
</body>
</html>
